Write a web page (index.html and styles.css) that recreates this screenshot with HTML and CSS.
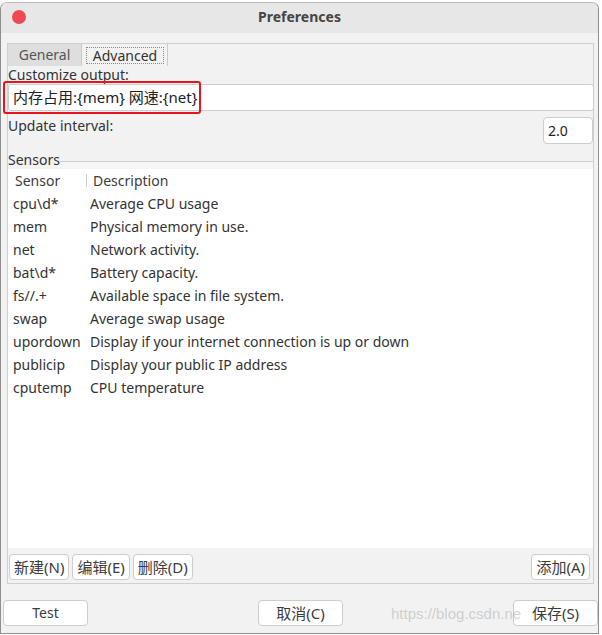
FILE: index.html
```html
<!DOCTYPE html>
<html>
<head>
<meta charset="utf-8">
<title>Preferences</title>
<link rel="stylesheet" href="styles.css">
</head>
<body>
<div class="window">
  <div class="titlebar">
    <span class="close"></span>
    <span class="title">Preferences</span>
    <span class="spacer"></span>
  </div>
  <div class="content">
    <div class="notebook">
      <div class="tabs">
        <div class="tab">General</div>
        <div class="tab active"><span class="focus">Advanced</span></div>
      </div>
      <div class="pane">
        <div class="label">Customize output:</div>
        <div class="entry-wrap">
          <div class="entry">内存占用:{mem} 网速:{net}</div>
          <div class="highlight"></div>
        </div>
        <div class="interval-row">
          <div class="label">Update interval:</div>
          <div class="spin">2.0</div>
        </div>
        <div class="frame-head">
          <span class="label">Sensors</span>
          <span class="frame-line"></span>
        </div>
        <div class="tree">
          <div class="tree-head">
            <div class="th first">Sensor</div>
            <div class="th second"><span class="sep"></span>Description</div>
          </div>
          <div class="tr"><div class="td first">cpu\d*</div><div class="td second">Average CPU usage</div></div>
          <div class="tr"><div class="td first">mem</div><div class="td second">Physical memory in use.</div></div>
          <div class="tr"><div class="td first">net</div><div class="td second">Network activity.</div></div>
          <div class="tr"><div class="td first">bat\d*</div><div class="td second">Battery capacity.</div></div>
          <div class="tr"><div class="td first">fs//.+</div><div class="td second">Available space in file system.</div></div>
          <div class="tr"><div class="td first">swap</div><div class="td second">Average swap usage</div></div>
          <div class="tr"><div class="td first">upordown</div><div class="td second">Display if your internet connection is up or down</div></div>
          <div class="tr"><div class="td first">publicip</div><div class="td second">Display your public IP address</div></div>
          <div class="tr"><div class="td first">cputemp</div><div class="td second">CPU temperature</div></div>
        </div>
        <div class="tree-buttons">
          <div class="left-buttons">
            <div class="btn small">新建(N)</div>
            <div class="btn small">编辑(E)</div>
            <div class="btn small">删除(D)</div>
          </div>
          <div class="btn small">添加(A)</div>
        </div>
      </div>
    </div>
    <div class="dialog-buttons">
      <div class="btn big">Test</div>
      <div class="btn big cjk">取消(C)</div>
      <div class="btn big cjk">保存(S)</div>
    </div>
  </div>
  <div class="watermark">https://blog.csdn.ne</div>
</div>
</body>
</html>
```
FILE: styles.css
```css
* { box-sizing: border-box; }
html, body { margin: 0; padding: 0; }
body {
  width: 602px;
  height: 635px;
  background: #ffffff;
  font-family: "Noto Sans", "Noto Sans CJK SC", sans-serif;
  font-size: 14px;
  color: #3c3c3c;
  overflow: hidden;
}
.window {
  margin-top: 2px;
  width: 599px;
  height: 632px;
  border: 1px solid #8e8e8e;
  border-top-color: #b8b8b8;
  border-radius: 7px 7px 0 0;
  background: #f2f2f2;
  display: flex;
  flex-direction: column;
  position: relative;
  overflow: hidden;
}
.titlebar {
  height: 30px;
  padding-bottom: 3px;
  background: #e7e7e7;
  display: flex;
  align-items: center;
  padding-left: 11px;
  flex-shrink: 0;
}
.close {
  width: 14px;
  height: 14px;
  border-radius: 50%;
  background: #ef4a53;
  flex-shrink: 0;
}
.spacer { width: 25px; flex-shrink: 0; }
.title {
  flex: 1;
  text-align: center;
  font-weight: bold;
  color: #454545;
}
.content {
  flex: 1;
  display: flex;
  flex-direction: column;
}
.notebook {
  margin: 10px 4px 0 6px;
  height: 541px;
  border: 1px solid #cfcfcf;
  display: flex;
  flex-direction: column;
}
.tabs {
  display: flex;
  height: 22px;
  flex-shrink: 0;
}
.tab {
  height: 22px;
  line-height: 21px;
  text-align: center;
  border-right: 1px solid #cacaca;
}
.tab:first-child {
  width: 74px;
  background: #dedede;
  color: #555555;
}
.tab.active {
  width: 86px;
  padding: 3px 3px 2px 4px;
  line-height: 15px;
}
.focus {
  display: block;
  height: 17px;
  border: 1px dotted #8a8a8a;
  line-height: 15px;
  color: #333;
}
.pane {
  flex: 1;
  display: flex;
  flex-direction: column;
}
.label {
  height: 18px;
  line-height: 18px;
  color: #333;
}
.entry-wrap {
  position: relative;
  height: 27px;
  flex-shrink: 0;
}
.entry {
  height: 27px;
  margin-right: -1px;
  background: #ffffff;
  border: 1px solid #cdcdcd;
  border-radius: 3px;
  padding-left: 4px;
  line-height: 25px;
  font-size: 15px;
  color: #222;
}
.highlight {
  position: absolute;
  left: -5px;
  top: -3px;
  width: 198px;
  height: 33px;
  border: 2px solid #e8141c;
  border-radius: 3px;
}
.interval-row {
  margin-top: 6px;
  display: flex;
  justify-content: space-between;
  align-items: flex-start;
  flex-shrink: 0;
}
.spin {
  width: 50px;
  height: 27px;
  background: #ffffff;
  border: 1px solid #cdcdcd;
  border-radius: 4px;
  padding-left: 4px;
  line-height: 25px;
  color: #222;
}
.frame-head {
  margin-top: 7px;
  display: flex;
  height: 18px;
  flex-shrink: 0;
}
.frame-line {
  flex: 1;
  margin-top: 10px;
  border-top: 1px solid #cfcfcf;
  background: #f6f6f6;
}
.tree {
  flex: 1;
  background: #ffffff;
  display: flex;
  flex-direction: column;
}
.tree-head, .tr {
  display: grid;
  grid-template-columns: 78px 1fr;
}
.tree-head { height: 23px; line-height: 23px; }
.tr { height: 23px; line-height: 23px; }
.th.first { padding-left: 7px; }
.th.second { display: flex; align-items: center; }
.sep {
  width: 1px;
  height: 13px;
  background: #cccccc;
  margin-right: 6px;
}
.td { color: #333; white-space: nowrap; }
.td.first { padding-left: 5px; }
.td.second { padding-left: 4px; }
.tree-buttons {
  margin: 6px 3px 3px 1px;
  display: flex;
  justify-content: space-between;
  flex-shrink: 0;
}
.left-buttons {
  display: flex;
  gap: 3px;
}
.btn {
  height: 26px;
  line-height: 24px;
  background: #ffffff;
  border: 1px solid #cdcdcd;
  border-radius: 4px;
  text-align: center;
  color: #3c3c3c;
}
.btn.small {
  padding: 0 4px;
  font-size: 15px;
}
.btn.cjk { font-size: 15px; }
.dialog-buttons {
  margin-top: 16px;
  padding: 0 0 0 2px;
  display: flex;
  justify-content: space-between;
}
.btn.big { width: 85px; }
.watermark {
  position: absolute;
  left: 390px;
  top: 602px;
  font-family: "Liberation Sans", sans-serif;
  font-size: 15px;
  color: rgba(170, 170, 170, 0.5);
  pointer-events: none;
  white-space: nowrap;
}
```
